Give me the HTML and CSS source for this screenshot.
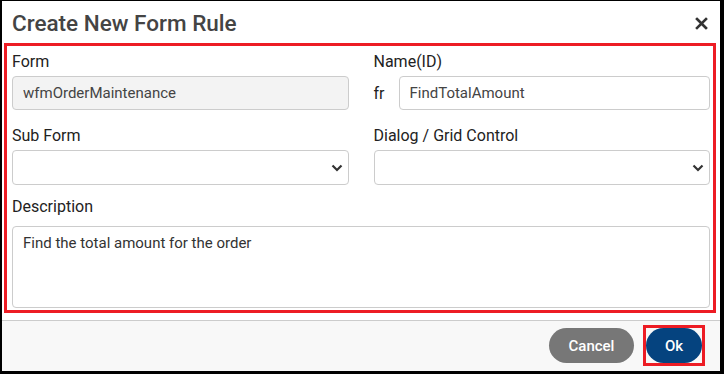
FILE: index.html
```html
<!DOCTYPE html>
<html lang="en">
<head>
    <meta charset="UTF-8">
    <title>Create New Form Rule</title>
    <link rel="stylesheet" href="styles.css">
</head>
<body>
    <div class="dialog">
        <div class="dialog-header">
            <h1>Create New Form Rule</h1>
            <button class="close-btn" aria-label="Close">
                <svg width="13" height="13" viewBox="0 0 13 13">
                    <path d="M2 2 L11 11 M11 2 L2 11" stroke="#333" stroke-width="2.6" stroke-linecap="square"/>
                </svg>
            </button>
        </div>

        <div class="dialog-body">
            <div class="highlight-box">
                <div class="form-grid">
                    <div class="field">
                        <label for="form">Form</label>
                        <input type="text" id="form" class="text-input" value="wfmOrderMaintenance" disabled>
                    </div>
                    <div class="field">
                        <label for="nameId">Name(ID)</label>
                        <div class="prefix-row">
                            <span class="prefix">fr</span>
                            <input type="text" id="nameId" class="text-input" value="FindTotalAmount">
                        </div>
                    </div>
                    <div class="field">
                        <label for="subForm">Sub Form</label>
                        <div class="select-wrap">
                            <select id="subForm" class="select-input"></select>
                            <svg class="chevron" width="12" height="8" viewBox="0 0 12 8">
                                <path d="M1.5 1.5 L6 6 L10.5 1.5" fill="none" stroke="#333" stroke-width="2.2"/>
                            </svg>
                        </div>
                    </div>
                    <div class="field">
                        <label for="gridControl">Dialog / Grid Control</label>
                        <div class="select-wrap">
                            <select id="gridControl" class="select-input"></select>
                            <svg class="chevron" width="12" height="8" viewBox="0 0 12 8">
                                <path d="M1.5 1.5 L6 6 L10.5 1.5" fill="none" stroke="#333" stroke-width="2.2"/>
                            </svg>
                        </div>
                    </div>
                    <div class="field field-wide">
                        <label for="description" class="desc-label">Description</label>
                        <textarea id="description" class="text-area">Find the total amount for the order</textarea>
                    </div>
                </div>
            </div>
        </div>

        <div class="dialog-footer">
            <button class="btn btn-cancel">Cancel</button>
            <span class="btn-mark">
                <button class="btn btn-ok">Ok</button>
            </span>
        </div>
    </div>
</body>
</html>
```

FILE: styles.css
```css
:root {
    --primary-color: #05437f;
    --grey-btn: #777;
    --border-color: #ccc;
    --mark-color: #ed1c24;
    --text-color: #222;
}

* {
    box-sizing: border-box;
}

body {
    margin: 0;
    padding: 1px 4px 3px 2px;
    background-color: #000;
    font-family: Roboto, 'Noto Sans', sans-serif;
    color: var(--text-color);
}

.dialog {
    background-color: white;
    height: 370px;
    display: flex;
    flex-direction: column;
}

.dialog-header {
    display: flex;
    justify-content: space-between;
    align-items: center;
    padding: 7px 12px 0 10px;
    height: 42px;
}

.dialog-header h1 {
    margin: 0;
    font-size: 22.5px;
    font-weight: 500;
    line-height: 30px;
    color: #444;
    align-self: flex-start;
}

.close-btn {
    background: none;
    border: none;
    padding: 0;
    margin-top: -4px;
    width: 13px;
    height: 13px;
    cursor: pointer;
    display: block;
}

.close-btn svg {
    display: block;
}

.dialog-body {
    padding: 0 4px 7px 2px;
}

.highlight-box {
    border: 3px solid var(--mark-color);
    padding: 7px 3px 2px 5px;
    height: 270px;
}

.form-grid {
    display: grid;
    grid-template-columns: 1fr 1fr;
    column-gap: 25px;
    row-gap: 17px;
}

.field {
    display: flex;
    flex-direction: column;
}

.field-wide {
    grid-column: 1 / 3;
    margin-top: -4px;
}

label {
    font-size: 16px;
    line-height: 18px;
    margin-bottom: 5px;
}

.desc-label {
    margin-bottom: 10px;
}

.text-input,
.select-input,
.text-area {
    width: 100%;
    border: 1px solid var(--border-color);
    border-radius: 4px;
    font-family: Roboto, 'Noto Sans', sans-serif;
    font-size: 15px;
    color: #444;
    background-color: white;
    outline: none;
}

.text-input {
    height: 34px;
    padding: 0 10px;
}

.text-input:disabled {
    background-color: #f3f3f3;
    color: #444;
    -webkit-text-fill-color: #444;
}

.prefix-row {
    display: flex;
    align-items: center;
}

.prefix {
    font-size: 16px;
    width: 25px;
    flex-shrink: 0;
}

.select-wrap {
    position: relative;
}

.select-input {
    height: 35px;
    appearance: none;
    -webkit-appearance: none;
    display: block;
}

.chevron {
    position: absolute;
    right: 6px;
    top: 14px;
    pointer-events: none;
}

.text-area {
    height: 82px;
    padding: 6px 10px;
    resize: none;
    line-height: 20px;
    color: #333;
}

.dialog-footer {
    flex: 1;
    border-top: 1px solid var(--border-color);
    background-color: #f8f8f8;
    display: flex;
    justify-content: flex-end;
    align-items: flex-start;
    padding: 4px 15px 0 0;
    gap: 9px;
}

.btn {
    height: 35px;
    border: none;
    border-radius: 18px;
    color: white;
    font-family: Roboto, 'Noto Sans', sans-serif;
    font-size: 15px;
    font-weight: 500;
    cursor: pointer;
    padding: 0;
}

.btn-cancel {
    background-color: var(--grey-btn);
    width: 85px;
    margin-top: 3px;
}

.btn-mark {
    display: block;
    border: 3px solid var(--mark-color);
}

.btn-ok {
    display: block;
    background-color: var(--primary-color);
    width: 56px;
}
```
